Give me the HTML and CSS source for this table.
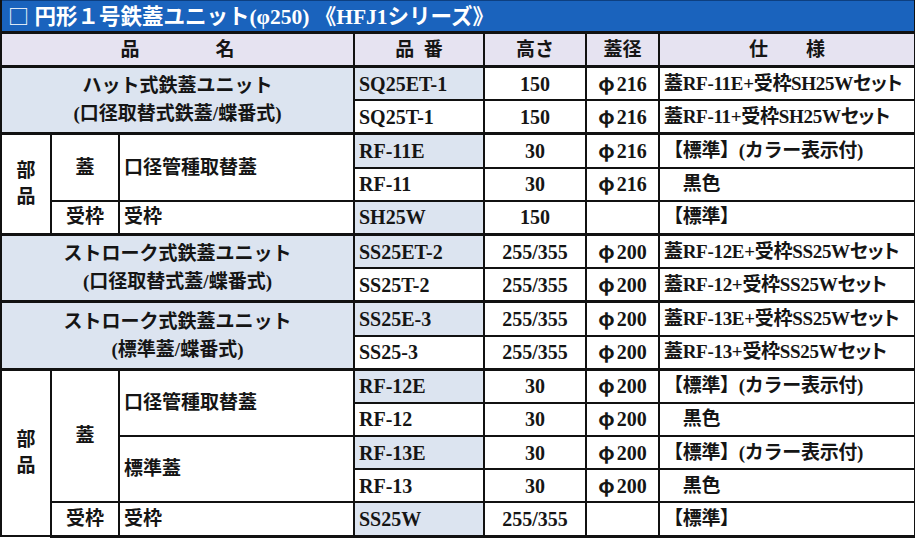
FILE: index.html
```html
<!DOCTYPE html>
<html lang="ja">
<head>
<meta charset="utf-8">
<title>円形１号鉄蓋ユニット</title>
<link rel="stylesheet" href="styles.css">
</head>
<body>
<table class="spec">
  <colgroup>
    <col class="c-bu"><col class="c-kind"><col class="c-name"><col class="c-no"><col class="c-h"><col class="c-d"><col class="c-spec">
  </colgroup>
  <thead>
    <tr class="title-row"><th colspan="7" class="title"><span class="box">□</span> 円形１号鉄蓋ユニット(φ250) 《HFJ1シリーズ》</th></tr>
    <tr class="head-row">
      <th colspan="3">品　　　　名</th>
      <th>品&ensp;番</th>
      <th>高さ</th>
      <th>蓋径</th>
      <th>仕　　様</th>
    </tr>
  </thead>
  <tbody>
    <tr class="sec">
      <td colspan="3" rowspan="2" class="unit">ハット式鉄蓋ユニット<br>(口径取替式鉄蓋/蝶番式)</td>
      <td class="no blue">SQ25ET-1</td><td class="num">150</td><td class="num"><span class="phi">φ</span>216</td><td class="txt">蓋RF-11E+受枠SH25W<span class="kana">セット</span></td>
    </tr>
    <tr class="sub">
      <td class="no">SQ25T-1</td><td class="num">150</td><td class="num"><span class="phi">φ</span>216</td><td class="txt">蓋RF-11+受枠SH25W<span class="kana">セット</span></td>
    </tr>
    <tr class="sec">
      <td rowspan="3" class="bu">部<br>品</td>
      <td rowspan="2" class="kind">蓋</td>
      <td rowspan="2" class="name">口径管種取替蓋</td>
      <td class="no blue">RF-11E</td><td class="num">30</td><td class="num"><span class="phi">φ</span>216</td><td class="txt">【標準】(カラー表示付)</td>
    </tr>
    <tr class="sub">
      <td class="no">RF-11</td><td class="num">30</td><td class="num"><span class="phi">φ</span>216</td><td class="txt">　黒色</td>
    </tr>
    <tr>
      <td class="kind">受枠</td><td class="name">受枠</td>
      <td class="no blue">SH25W</td><td class="num">150</td><td class="num"></td><td class="txt">【標準】</td>
    </tr>
    <tr class="sec">
      <td colspan="3" rowspan="2" class="unit">ストローク式鉄蓋ユニット<br>(口径取替式蓋/蝶番式)</td>
      <td class="no blue">SS25ET-2</td><td class="num">255/355</td><td class="num"><span class="phi">φ</span>200</td><td class="txt">蓋RF-12E+受枠SS25W<span class="kana">セット</span></td>
    </tr>
    <tr class="sub">
      <td class="no">SS25T-2</td><td class="num">255/355</td><td class="num"><span class="phi">φ</span>200</td><td class="txt">蓋RF-12+受枠SS25W<span class="kana">セット</span></td>
    </tr>
    <tr class="sec">
      <td colspan="3" rowspan="2" class="unit">ストローク式鉄蓋ユニット<br>(標準蓋/蝶番式)</td>
      <td class="no blue">SS25E-3</td><td class="num">255/355</td><td class="num"><span class="phi">φ</span>200</td><td class="txt">蓋RF-13E+受枠SS25W<span class="kana">セット</span></td>
    </tr>
    <tr class="sub">
      <td class="no">SS25-3</td><td class="num">255/355</td><td class="num"><span class="phi">φ</span>200</td><td class="txt">蓋RF-13+受枠SS25W<span class="kana">セット</span></td>
    </tr>
    <tr class="sec">
      <td rowspan="5" class="bu">部<br>品</td>
      <td rowspan="4" class="kind">蓋</td>
      <td rowspan="2" class="name">口径管種取替蓋</td>
      <td class="no blue">RF-12E</td><td class="num">30</td><td class="num"><span class="phi">φ</span>200</td><td class="txt">【標準】(カラー表示付)</td>
    </tr>
    <tr class="sub">
      <td class="no">RF-12</td><td class="num">30</td><td class="num"><span class="phi">φ</span>200</td><td class="txt">　黒色</td>
    </tr>
    <tr>
      <td rowspan="2" class="name">標準蓋</td>
      <td class="no blue">RF-13E</td><td class="num">30</td><td class="num"><span class="phi">φ</span>200</td><td class="txt">【標準】(カラー表示付)</td>
    </tr>
    <tr class="sub">
      <td class="no">RF-13</td><td class="num">30</td><td class="num"><span class="phi">φ</span>200</td><td class="txt">　黒色</td>
    </tr>
    <tr>
      <td class="kind">受枠</td><td class="name">受枠</td>
      <td class="no blue">SS25W</td><td class="num">255/355</td><td class="num"></td><td class="txt">【標準】</td>
    </tr>
  </tbody>
</table>
</body>
</html>
```
FILE: styles.css
```css
html, body {
  margin: 0;
  padding: 0;
  background: #ffffff;
}

.spec {
  width: 915px;
  table-layout: fixed;
  border-collapse: collapse;
  font-family: "Liberation Serif", "Noto Sans CJK JP", serif;
  font-weight: 700;
  font-size: 19px;
  color: #151515;
  line-height: 22px;
}

.c-bu { width: 50px; }
.c-kind { width: 68px; }
.c-name { width: 235px; }
.c-no { width: 130px; }
.c-h { width: 102px; }
.c-d { width: 73px; }
.c-spec { width: 257px; }

.spec th,
.spec td {
  border: 2px solid #111111;
  padding: 0 4px;
  white-space: nowrap;
  overflow: hidden;
}

.title-row .title {
  height: 30px;
  background: #1a63bd;
  color: #ffffff;
  text-align: left;
  font-size: 21.5px;
  line-height: 26px;
  padding: 0 6px;
  border-top: 1px solid #0d3f80;
  border-left: 2px solid #111111;
  border-right: 4px solid #111111;
  border-bottom: 3px solid #111111;
  overflow: visible;
}

.title .box {
  font-family: "Noto Sans CJK JP", sans-serif;
  font-weight: 400;
  font-size: 21px;
}

.phi {
  font-family: "Noto Sans CJK JP", sans-serif;
  font-weight: 700;
  line-height: 1;
  padding-right: 2px;
}

.head-row th {
  height: 31px;
  background: #e6e3f1;
  text-align: center;
  font-weight: 700;
  border-bottom: 3px solid #111111;
}

.spec tbody td {
  height: 31.2px;
}

.spec tr > :first-child {
  border-left-width: 2px;
}

.spec tr > :last-child {
  border-right-width: 4px;
}

.spec tbody tr:last-child td {
  border-bottom-width: 3px;
}

.spec tr.sec > td {
  border-top-width: 3px;
}

.spec tr.sub > td {
  border-top-width: 1px;
}

.unit {
  background: #dce4f0;
  text-align: center;
  line-height: 28px;
}

.bu {
  text-align: center;
  line-height: 26px;
}

.kind {
  text-align: center;
}

.name {
  text-align: left;
  padding-left: 5px;
}

.no {
  text-align: left;
  padding-left: 3px;
  font-size: 20px;
}

.blue {
  background: #dce4f0;
}

.num {
  text-align: center;
  font-size: 20px;
}

.txt {
  text-align: left;
  padding-left: 4px;
  letter-spacing: -0.3px;
}

.kana {
  font-feature-settings: "palt";
}
```
